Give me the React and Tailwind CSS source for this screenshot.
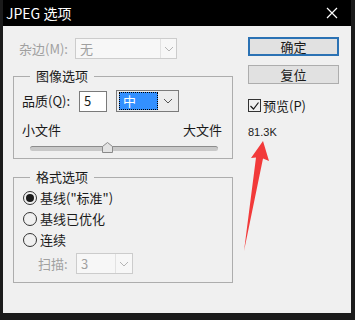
import React from 'react';

const cjk = { fontFamily: '"Noto Sans CJK SC", "Noto Sans", sans-serif' };

const Chevron = ({ color = '#a0a0a0' }) => (
  <svg width="10" height="6" viewBox="0 0 10 6">
    <path d="M1 1 L5 5 L9 1" fill="none" stroke={color} strokeWidth="1" />
  </svg>
);

const DisabledSelect = ({ value, width, split }) => (
  <div className={`flex h-[21px] border border-[#cccccc] bg-[#f7f7f7] ${width}`}>
    <div className={`flex items-center pl-[4px] text-[#a0a0a0] ${split}`}>{value}</div>
    <div className="flex flex-1 items-center justify-center border-l border-[#e2e2e2]">
      <Chevron color="#b4b4b4" />
    </div>
  </div>
);

const Radio = ({ checked, label }) => (
  <div className="flex h-[21px] items-center gap-[3px] pl-[9px]">
    <div className="flex h-[14px] w-[14px] items-center justify-center rounded-full border border-[#333333] bg-[#f0f0f0]">
      {checked && <div className="h-[8px] w-[8px] rounded-full bg-[#1a1a1a]" />}
    </div>
    <span>{label}</span>
  </div>
);

const Group = ({ title, className = '', children }) => (
  <fieldset className={`border border-[#adadad] ${className}`}>
    <legend className="ml-[16px] px-[6px] leading-[18px]">{title}</legend>
    {children}
  </fieldset>
);

export default function App() {
  return (
    <div className="relative h-[320px] w-[355px] overflow-hidden bg-[#1b1b1b] pb-[7px] pl-[3px] pr-[4px]" style={cjk}>
      <div className="flex h-full flex-col bg-[#f0f0f0] text-[13px] text-[#1a1a1a]">
        <div className="flex h-[26px] items-center justify-between bg-black pl-[3px] pr-[13px] text-[14px] text-white">
          <span>JPEG 选项</span>
          <svg width="12" height="12" viewBox="0 0 12 12">
            <path d="M1 1 L11 11 M11 1 L1 11" stroke="#ffffff" strokeWidth="1.2" />
          </svg>
        </div>

        <div className="flex flex-1 pt-[12px]">
          <div className="ml-[10px] w-[220px]">
            <div className="flex items-center">
              <span className="ml-[6px] w-[56px] text-[#a0a0a0]">杂边(M):</span>
              <DisabledSelect value="无" width="w-[102px]" split="w-[84px]" />
            </div>

            <Group title="图像选项" className="mt-[8px] h-[92px]">
              <div className="mt-[5px] flex items-center">
                <span className="ml-[8px] w-[57px]">品质(Q):</span>
                <div className="flex h-[21px] w-[28px] items-center border border-[#7a7a7a] bg-white pl-[4px]">5</div>
                <div className="ml-[9px] flex h-[22px] w-[63px] items-center border border-[#7a7a7a] bg-[#ececec] pl-[2px]">
                  <div className="flex h-[18px] w-[39px] items-center border border-dotted border-black bg-[#3390ff] pl-[3px] text-white">中</div>
                  <div className="flex flex-1 justify-center"><Chevron color="#555555" /></div>
                </div>
              </div>
              <div className="mt-[8px] flex justify-between pl-[8px] pr-[10px]">
                <span>小文件</span>
                <span>大文件</span>
              </div>
              <div className="relative ml-[16px] mt-[6px] h-[5px] w-[188px] rounded-full border-t border-[#8c8c8c] bg-[#c8c8c8]">
                <svg className="absolute left-[72px] top-[-5px]" width="11" height="11" viewBox="0 0 11 11">
                  <path d="M0.5 10.5 L0.5 4.5 L5.5 0.5 L10.5 4.5 L10.5 10.5 Z" fill="#e3e3e3" stroke="#8a8a8a" />
                </svg>
              </div>
            </Group>

            <Group title="格式选项" className="mt-[9px] h-[115px]">
              <div className="mt-[1px]">
                <Radio checked label={'基线("标准")'} />
                <Radio label="基线已优化" />
                <Radio label="连续" />
              </div>
              <div className="mt-[3px] flex items-center">
                <span className="ml-[24px] w-[38px] text-[#a0a0a0]">扫描:</span>
                <DisabledSelect value="3" width="w-[57px]" split="w-[38px]" />
              </div>
            </Group>
          </div>

          <div className="ml-[15px] flex w-[91px] flex-col">
            <button className="mt-[-1px] h-[19px] border-2 border-[#2b72b4] bg-[#e1e1e1] leading-[15px]">确定</button>
            <button className="mt-[9px] h-[19px] border border-[#adadad] bg-[#e1e1e1] leading-[17px]">复位</button>
            <div className="mt-[12px] flex items-center gap-[2px]">
              <div className="flex h-[13px] w-[13px] items-center justify-center border border-[#333333] bg-[#f0f0f0]">
                <svg width="9" height="8" viewBox="0 0 9 8">
                  <path d="M0.5 4 L3.5 7 L8.5 0.5" fill="none" stroke="#1a1a1a" strokeWidth="1.2" />
                </svg>
              </div>
              <span>预览(P)</span>
            </div>
            <span className="mt-[8px] text-[11px]" style={{ fontFamily: '"Liberation Sans", sans-serif' }}>81.3K</span>
          </div>
        </div>
      </div>

      <svg className="absolute left-0 top-0" width="355" height="320" viewBox="0 0 355 320">
        <path d="M263 141 L269 161 L263 158.5 L244 251 L256 157.5 L251 158 Z" fill="#f23a3a" />
      </svg>
    </div>
  );
}
